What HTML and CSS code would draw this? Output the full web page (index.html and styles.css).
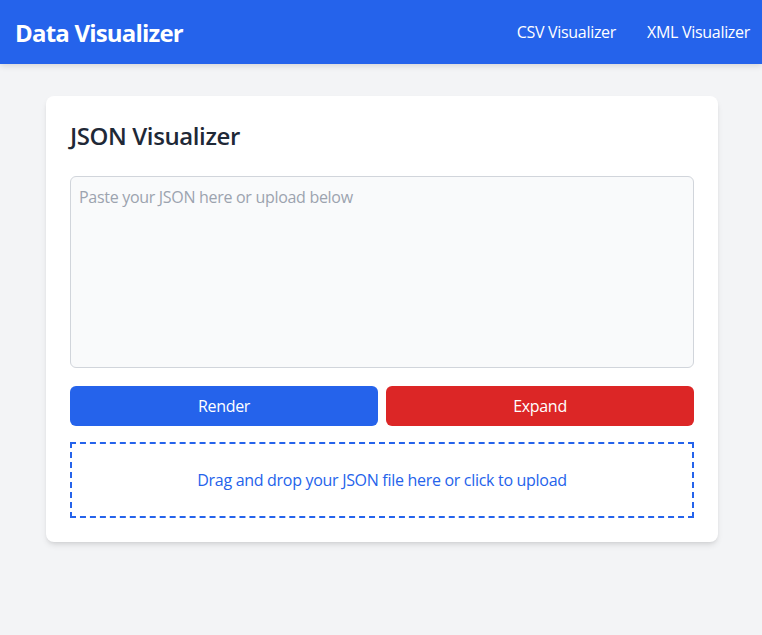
FILE: index.html
```html
<!DOCTYPE html>
<html lang="en">
<head>
<meta charset="utf-8">
<title>Data Visualizer</title>
<link rel="stylesheet" href="styles.css">
</head>
<body>
<header class="topbar">
  <h1 class="brand">Data Visualizer</h1>
  <nav class="nav">
    <a class="nav-link" href="#">CSV Visualizer</a>
    <a class="nav-link" href="#">XML Visualizer</a>
  </nav>
</header>
<main class="main">
  <section class="card">
    <h2 class="card-title">JSON Visualizer</h2>
    <textarea class="json-input" placeholder="Paste your JSON here or upload below"></textarea>
    <div class="actions">
      <button class="btn btn-render">Render</button>
      <button class="btn btn-expand">Expand</button>
    </div>
    <div class="dropzone">Drag and drop your JSON file here or click to upload</div>
  </section>
</main>
</body>
</html>
```
FILE: styles.css
```css
* { box-sizing: border-box; }
html, body { margin: 0; padding: 0; }
body {
  background: #f3f4f6;
  font-family: "Open Sans", "Noto Sans", sans-serif;
  color: #1f2937;
  min-height: 635px;
}
.topbar {
  height: 64px;
  background: #2563eb;
  color: #fff;
  display: flex;
  align-items: center;
  justify-content: space-between;
  padding: 0 12px 0 15px;
  box-shadow: 0 2px 6px rgba(0,0,0,0.12);
}
.brand {
  margin: 0;
  font-size: 24px;
  font-weight: 700;
  letter-spacing: -0.8px;
}
.nav { display: flex; gap: 31px; }
.nav-link {
  color: #fff;
  text-decoration: none;
  font-size: 16px;
  letter-spacing: -0.3px;
}
.main { padding: 32px 0 0 2px; }
.card {
  width: 672px;
  margin: 0 auto;
  background: #fff;
  border-radius: 8px;
  padding: 24px;
  box-shadow: 0 4px 6px -1px rgba(0,0,0,0.1), 0 2px 4px -2px rgba(0,0,0,0.1);
}
.card-title {
  margin: 0 0 24px;
  font-size: 24px;
  line-height: 32px;
  font-weight: 600;
  color: #1f2937;
  letter-spacing: -0.4px;
}
.json-input {
  display: block;
  width: 100%;
  height: 192px;
  margin: 0 0 18px;
  padding: 8px;
  background: #f9fafb;
  border: 1px solid #d1d5db;
  border-radius: 6px;
  font-family: inherit;
  font-size: 16px;
  line-height: 24px;
  resize: none;
  letter-spacing: -0.3px;
}
.json-input::placeholder { color: #9ca3af; }
.actions { display: flex; gap: 8px; }
.btn {
  flex: 1;
  height: 40px;
  border: 0;
  border-radius: 6px;
  color: #fff;
  font-family: inherit;
  font-size: 16px;
  letter-spacing: -0.3px;
}
.btn-render { background: #2563eb; }
.btn-expand { background: #dc2626; }
.dropzone {
  margin-top: 16px;
  border: 2px dashed #2563eb;
  padding: 24px;
  text-align: center;
  line-height: 24px;
  font-size: 16px;
  color: #2563eb;
  letter-spacing: -0.3px;
}
```
